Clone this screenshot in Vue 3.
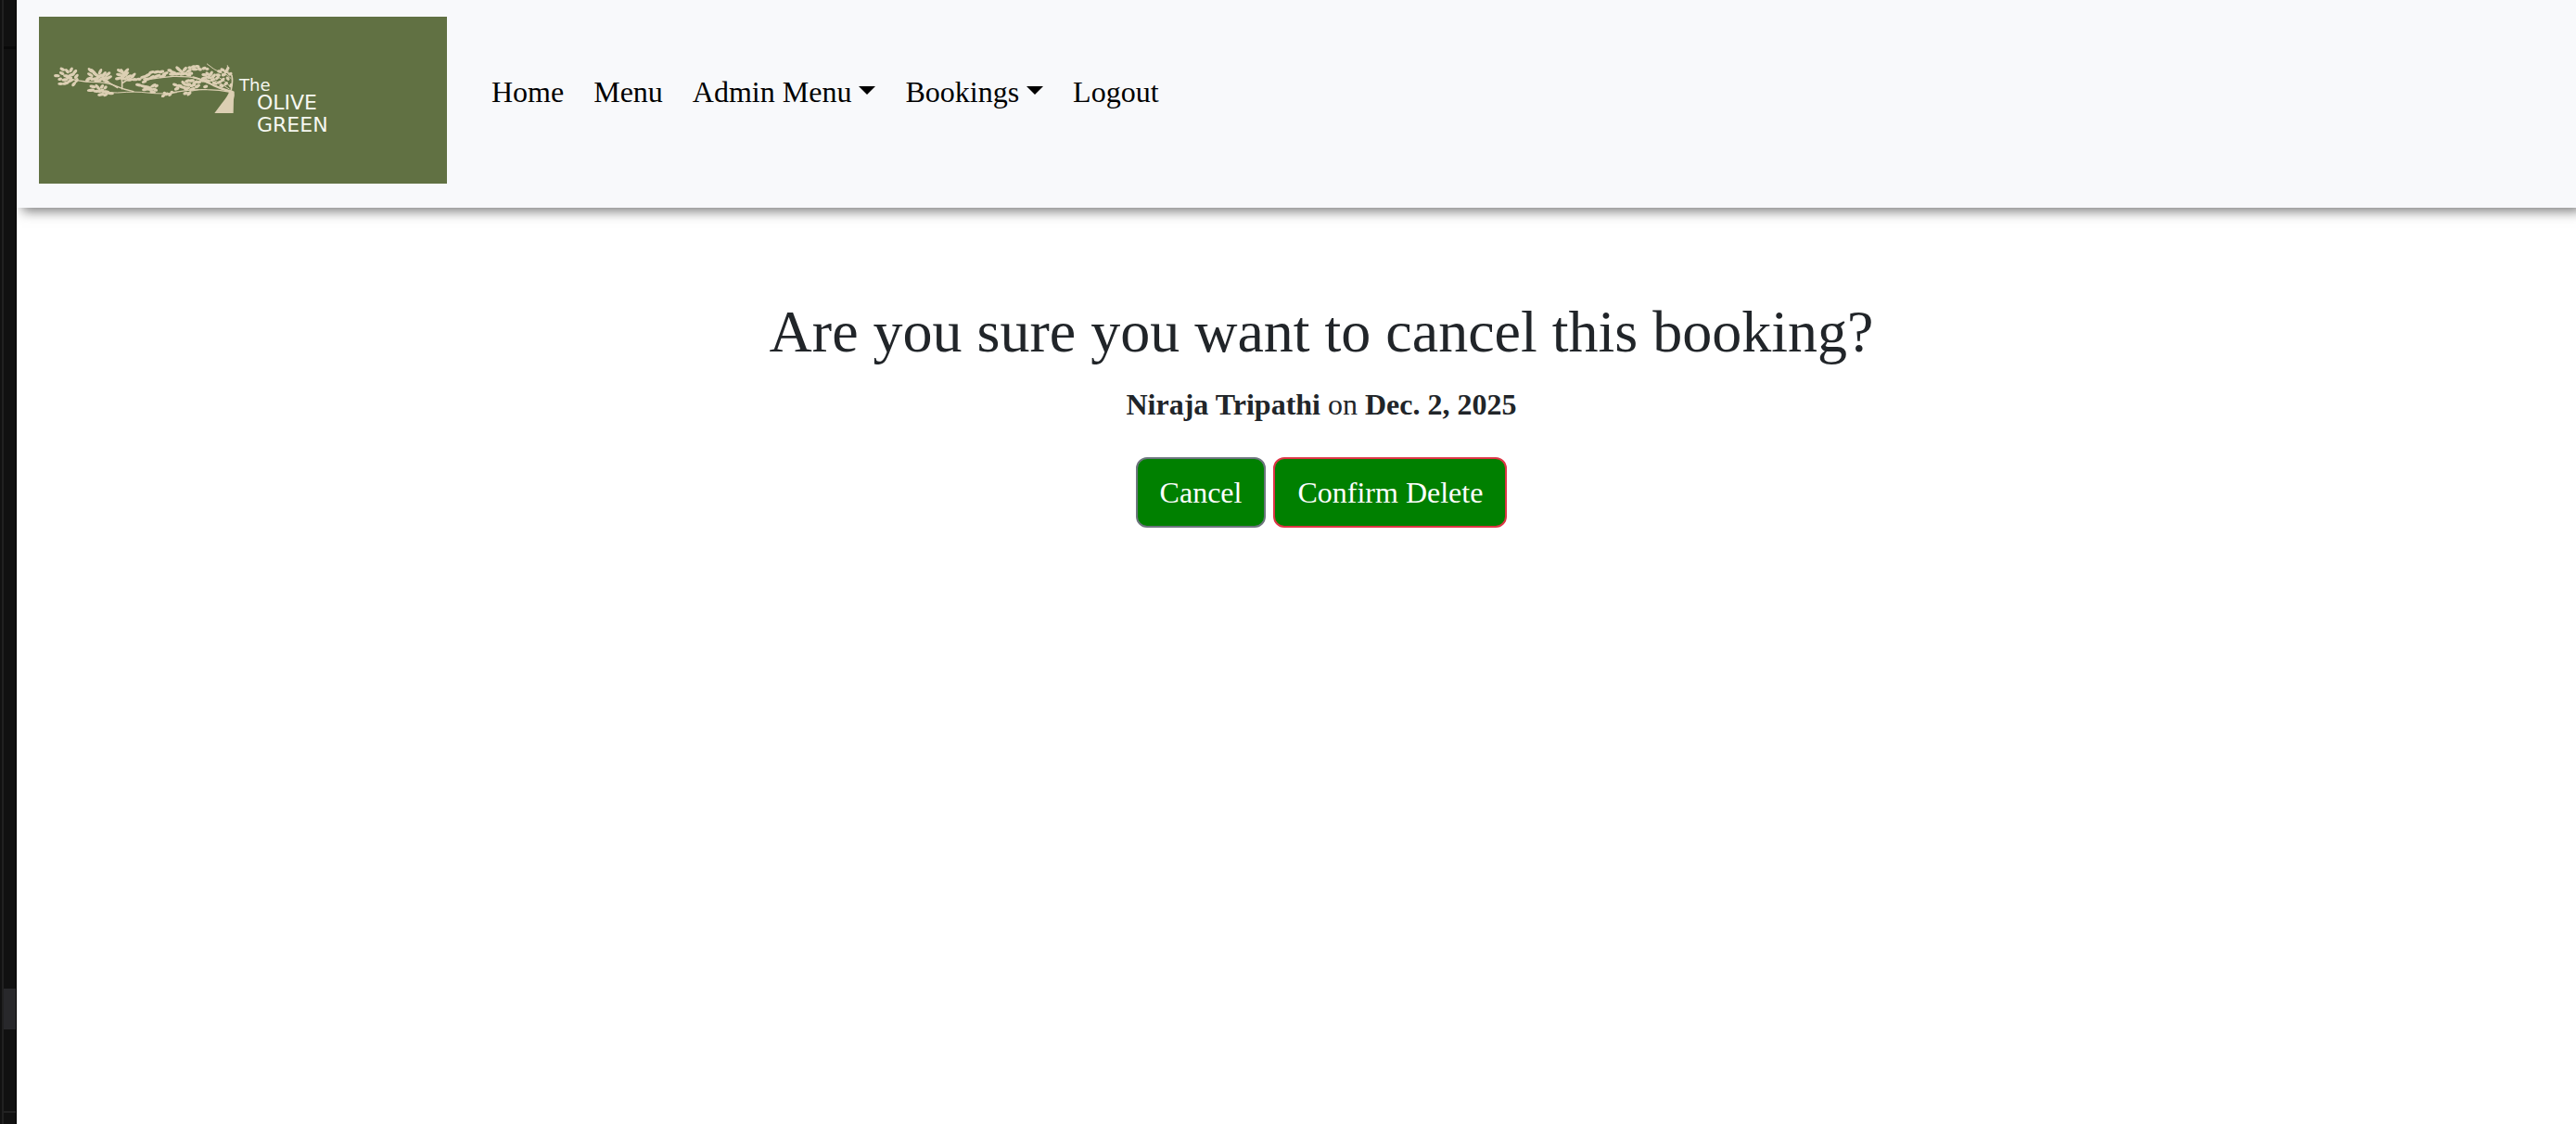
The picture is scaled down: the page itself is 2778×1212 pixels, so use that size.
<script setup>
const links = [
  { label: 'Home' },
  { label: 'Menu' },
  { label: 'Admin Menu', dropdown: true },
  { label: 'Bookings', dropdown: true },
  { label: 'Logout' },
]

// Each leaf: centre x, centre y, half length, rotation in degrees
const leaves = [
  [64, 95, 11, 5], [80, 87, 10, 25], [82, 74, 10, 25], [97, 80, 10, 50], [110, 76, 10, -60], [122, 83, 11, -50],
  [95, 96, 12, 12], [112, 92, 12, -20], [127, 97, 10, -50], [74, 106, 8, -8], [90, 108, 12, -12], [76, 121, 10, 0],
  [93, 119, 13, -18], [108, 111, 12, -25], [119, 122, 10, -50], [128, 110, 9, -60], [104, 101, 12, 10],
  [172, 77, 11, 45], [182, 82, 14, 45], [172, 92, 12, 30], [190, 91, 15, 35], [204, 82, 12, -65], [170, 104, 12, -15],
  [186, 105, 15, -15], [202, 97, 14, -35], [216, 91, 13, -50], [229, 90, 12, -40], [214, 103, 16, -20],
  [232, 101, 13, -25], [196, 110, 14, 0], [222, 112, 13, 25], [163, 109, 8, -20],
  [180, 130, 12, 15], [174, 142, 14, -5], [196, 132, 13, 50], [210, 130, 9, -50], [221, 133, 8, -45],
  [193, 145, 13, 0], [207, 143, 12, -25], [222, 147, 14, 5], [238, 152, 12, 5], [207, 156, 13, -12], [222, 156, 10, -30],
  [267, 79, 11, 30], [276, 83, 13, 60], [289, 79, 12, -45], [266, 92, 12, 15], [282, 94, 13, -20], [262, 104, 11, -10],
  [279, 104, 13, 10], [296, 98, 13, -25], [311, 94, 12, -45], [316, 107, 11, 0], [300, 108, 12, -10], [288, 89, 12, -30],
  [330, 106, 9, 5], [344, 99, 12, -15], [358, 93, 12, -25], [370, 84, 11, -20], [386, 83, 12, -15], [402, 82, 11, -15],
  [415, 88, 12, -25], [354, 106, 13, -5], [370, 101, 13, -30], [388, 96, 14, -20], [406, 96, 13, -20], [347, 114, 10, -20],
  [328, 125, 11, 10], [344, 129, 13, 18], [358, 132, 13, 15], [376, 127, 12, -30], [386, 128, 8, -30], [350, 139, 12, -15],
  [366, 139, 14, 0], [382, 140, 10, 25], [374, 148, 11, 10],
  [429, 78, 9, 10], [440, 84, 12, 15], [437, 90, 12, 0], [456, 72, 11, 45], [465, 80, 13, 40], [478, 74, 11, -50],
  [491, 79, 12, -30], [454, 89, 13, -5], [473, 89, 14, -15], [488, 91, 13, 20], [497, 87, 9, 10],
  [494, 69, 8, 0], [506, 66, 9, -10], [519, 65, 9, 10], [510, 74, 11, 5], [526, 74, 9, 20], [540, 71, 9, -15], [550, 73, 7, 0],
  [446, 124, 9, 10], [459, 127, 12, 0], [452, 137, 10, -20], [470, 132, 12, 15], [474, 119, 11, 50], [486, 112, 10, -20],
  [500, 111, 11, -10], [512, 116, 11, -25], [488, 123, 12, -5], [504, 126, 12, -20], [519, 129, 11, -30], [485, 136, 12, -20],
  [502, 138, 11, -15], [480, 152, 9, -20], [492, 153, 10, -40], [524, 116, 9, -20], [545, 130, 9, -15],
  [541, 92, 10, 10], [552, 89, 10, 40], [563, 88, 10, -60], [540, 103, 11, -15], [555, 100, 12, 15], [571, 96, 11, -45],
  [536, 111, 9, 0], [552, 111, 11, 15], [568, 108, 10, -25], [583, 102, 9, -40], [575, 119, 10, 20], [590, 116, 10, -30],
  [601, 108, 9, -45], [597, 127, 9, 15], [611, 121, 9, -40], [617, 104, 8, 50], [586, 93, 9, 10], [604, 92, 9, -20],
  [600, 76, 9, 25], [611, 81, 9, -50], [590, 81, 9, 10], [625, 89, 8, -30], [617, 72, 8, -60], [627, 126, 8, -60],
  [408, 160, 7, -20], [419, 154, 8, -20], [430, 156, 8, -35], [436, 148, 6, 0], [412, 151, 6, 5],
]
</script>

<template>
  <div class="screen">
    <div class="edge" aria-hidden="true">
      <span class="edge-rule"></span>
      <span class="edge-block"></span>
      <span class="edge-foot"></span>
    </div>

    <div class="page">
      <header class="navbar">
        <a href="#" class="brand" aria-label="The Olive Green">
          <svg class="logo" viewBox="0 0 440 180">
            <rect width="440" height="180" fill="#617143" />
            <g transform="translate(-2 32) scale(0.3333)" fill="#dccfb3" stroke="none">
              <ellipse
                v-for="(leaf, i) in leaves"
                :key="i"
                :cx="leaf[0]"
                :cy="leaf[1]"
                :rx="leaf[2] * 0.9"
                ry="5"
                :transform="`rotate(${leaf[3]} ${leaf[0]} ${leaf[1]})`"
              />
              <path d="M574 216 L598 184 Q618 160 621 148 L612 143 Q626 138 638 146 Q640 156 636 172 L635 216 Z" />
              <g fill="none" stroke="#dccfb3" stroke-linecap="round">
                <path stroke-width="4" d="M98 103 Q140 114 175 115 Q225 116 246 125 Q280 140 312 146" />
                <path stroke-width="4" d="M212 102 Q236 120 260 134" />
                <path stroke-width="5" d="M275 137 Q276 112 272 92 M277 118 Q292 106 312 98" />
                <path stroke-width="3" d="M180 143 Q225 151 260 150 Q320 145 356 150 Q410 156 452 149" />
                <path stroke-width="4" d="M434 150 Q500 138 550 140 Q590 140 626 148" />
                <path stroke-width="4" d="M350 108 Q398 100 440 97 Q490 96 520 104 Q556 122 628 145" />
                <path stroke-width="6" d="M505 100 Q545 111 574 128 Q602 142 628 146" />
                <path stroke-width="3" d="M335 127 Q365 132 378 148 M450 132 Q500 132 524 112 M478 153 Q500 142 522 140" />
                <path stroke-width="5" d="M628 140 Q634 112 630 94 Q612 82 596 74" />
                <path stroke-width="3" d="M550 57 Q572 76 596 86 Q618 90 628 104 M616 62 L618 84 M560 103 Q598 120 622 138 M584 98 Q610 110 626 132 M403 163 L440 148" />
              </g>
            </g>
            <g class="logo-text">
              <text x="216" y="80" font-size="18">The</text>
              <text x="235" y="100" font-size="22">OLIVE</text>
              <text x="235" y="124" font-size="22">GREEN</text>
            </g>
          </svg>
        </a>
        <nav aria-label="Main">
          <ul class="nav-list">
            <li v-for="link in links" :key="link.label">
              <button v-if="link.dropdown" type="button" class="nav-link dropdown" aria-haspopup="true">
                {{ link.label }}
              </button>
              <a v-else href="#" class="nav-link">{{ link.label }}</a>
            </li>
          </ul>
        </nav>
      </header>

      <main class="content">
        <h2 class="title">Are you sure you want to cancel this booking?</h2>
        <p class="booking"><strong>Niraja Tripathi</strong> on <strong>Dec. 2, 2025</strong></p>
        <form class="actions" @submit.prevent>
          <a href="#" class="btn btn-secondary">Cancel</a>
          <button type="submit" class="btn btn-danger">Confirm Delete</button>
        </form>
      </main>
    </div>
  </div>
</template>

<style>
body {
  margin: 0;
  background: #fff;
}
</style>

<style scoped>
.screen {
  display: grid;
  grid-template-columns: 18px 1fr;
  min-height: 100vh;
  font-family: "Liberation Serif", "Times New Roman", serif;
  font-size: 32px;
  line-height: 48px;
  color: #212529;
}

.edge {
  box-sizing: border-box;
  display: flex;
  flex-direction: column;
  border-right: 1px solid #000;
  padding: 50px 0 12px 4px;
  background: linear-gradient(to right, #111 2px, #212121 2px, #212121 4px, #111 4px);
}

.edge-rule {
  height: 3px;
  background: #090909;
}

.edge-block {
  height: 44px;
  margin-top: auto;
  background: #28282b;
}

.edge-foot {
  height: 2px;
  margin-top: 88px;
  background: #222;
}

.page {
  min-width: 0;
  overflow: hidden;
}

.navbar {
  display: flex;
  align-items: flex-start;
  gap: 32px;
  padding: 18px 24px 26px;
  background: #f8f9fb;
  box-shadow: 6px 4px 12px rgba(0, 0, 0, 0.5);
}

.brand {
  display: block;
}

.logo {
  display: block;
  width: 440px;
  height: 180px;
}

.logo-text {
  font-family: "DejaVu Sans", sans-serif;
  fill: #f6f8f1;
}

.nav-list {
  display: flex;
  margin: 41px 0 0;
  padding: 0;
  list-style: none;
}

.nav-link {
  display: block;
  padding: 16px;
  border: 0;
  background: none;
  color: #000;
  font: inherit;
  text-decoration: none;
  white-space: nowrap;
}

.dropdown::after {
  content: "";
  display: inline-block;
  margin-left: 8px;
  vertical-align: 8px;
  border-top: 9px solid;
  border-right: 9px solid transparent;
  border-left: 9px solid transparent;
}

.content {
  padding: 95px 0 96px 54px;
  text-align: center;
}

.title {
  margin: 0 0 16px;
  font-size: 64px;
  font-weight: 400;
  line-height: 77px;
}

.booking {
  margin: 0 0 33px;
}

.actions {
  display: flex;
  justify-content: center;
  gap: 8px;
}

.btn {
  padding: 12px 24px;
  border: 2px solid;
  border-radius: 12px;
  background: green;
  color: #fff;
  font: inherit;
  text-decoration: none;
}

.btn-secondary {
  border-color: #6c757d;
}

.btn-danger {
  border-color: #dc3545;
}
</style>
